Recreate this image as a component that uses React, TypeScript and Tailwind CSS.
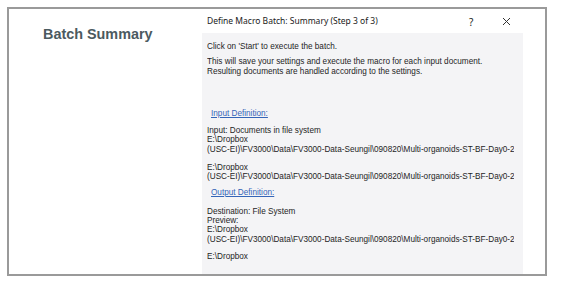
import React from "react";

const path = "(USC-EI)\\FV3000\\Data\\FV3000-Data-Seungil\\090820\\Multi-organoids-ST-BF-Day0-20200908";

export default function App() {
  return (
    <div className="w-[565px] h-[286px] bg-white overflow-hidden pt-[7px] pl-[7px]">
      <div className="w-[540px] h-[269px] border-2 border-[#9a9a9a] flex">
        <div className="w-[193px] pl-[34px] pt-[16px]">
          <h1 className="text-[14.4px] font-bold text-[#4b5a5f] leading-[18px]" style={{ fontFamily: '"Liberation Sans", Arial, sans-serif' }}>
            Batch Summary
          </h1>
        </div>
        <div className="w-[321px] flex flex-col" style={{ fontFamily: '"Noto Sans", "Liberation Sans", sans-serif' }}>
          <div className="h-[24px] flex items-center pl-[5px] text-[8.5px] text-[#1a1a1a] relative">
            <span>Define Macro Batch: Summary (Step 3 of 3)</span>
            <span className="absolute left-[267px] top-[6px] text-[10px]">?</span>
            <svg className="absolute left-[300px] top-[8px]" width="9" height="9" viewBox="0 0 9 9">
              <path d="M1 1L8 8M8 1L1 8" stroke="#333" strokeWidth="1" />
            </svg>
          </div>
          <div className="flex-1 bg-[#f4f4f6] pl-[5px] pr-[9px] pt-[9px] text-[8.2px] leading-[10px] text-[#1e1e1e]" style={{ fontFamily: 'Tahoma, "Liberation Sans", sans-serif' }}>
            <div className="w-full h-full overflow-hidden whitespace-nowrap">
              <div>Click on 'Start' to execute the batch.</div>
              <div className="mt-[5px]">
                <div>This will save your settings and execute the macro for each input document.</div>
                <div>Resulting documents are handled according to the settings.</div>
              </div>
              <div className="mt-[32px] pl-[4px] text-[#3465b8] underline">Input Definition:</div>
              <div className="mt-[7px] leading-[9.25px]">
                <div>Input: Documents in file system</div>
                <div>E:\Dropbox</div>
                <div>{path}</div>
                <div className="h-[9.25px]"></div>
                <div>E:\Dropbox</div>
                <div>{path}</div>
              </div>
              <div className="mt-[6px] pl-[4px] text-[#3465b8] underline">Output Definition:</div>
              <div className="mt-[9px] leading-[9.4px]">
                <div>Destination: File System</div>
                <div>Preview:</div>
                <div>E:\Dropbox</div>
                <div>{path}</div>
                <div className="h-[8px]"></div>
                <div>E:\Dropbox</div>
              </div>
            </div>
          </div>
        </div>
      </div>
    </div>
  );
}
